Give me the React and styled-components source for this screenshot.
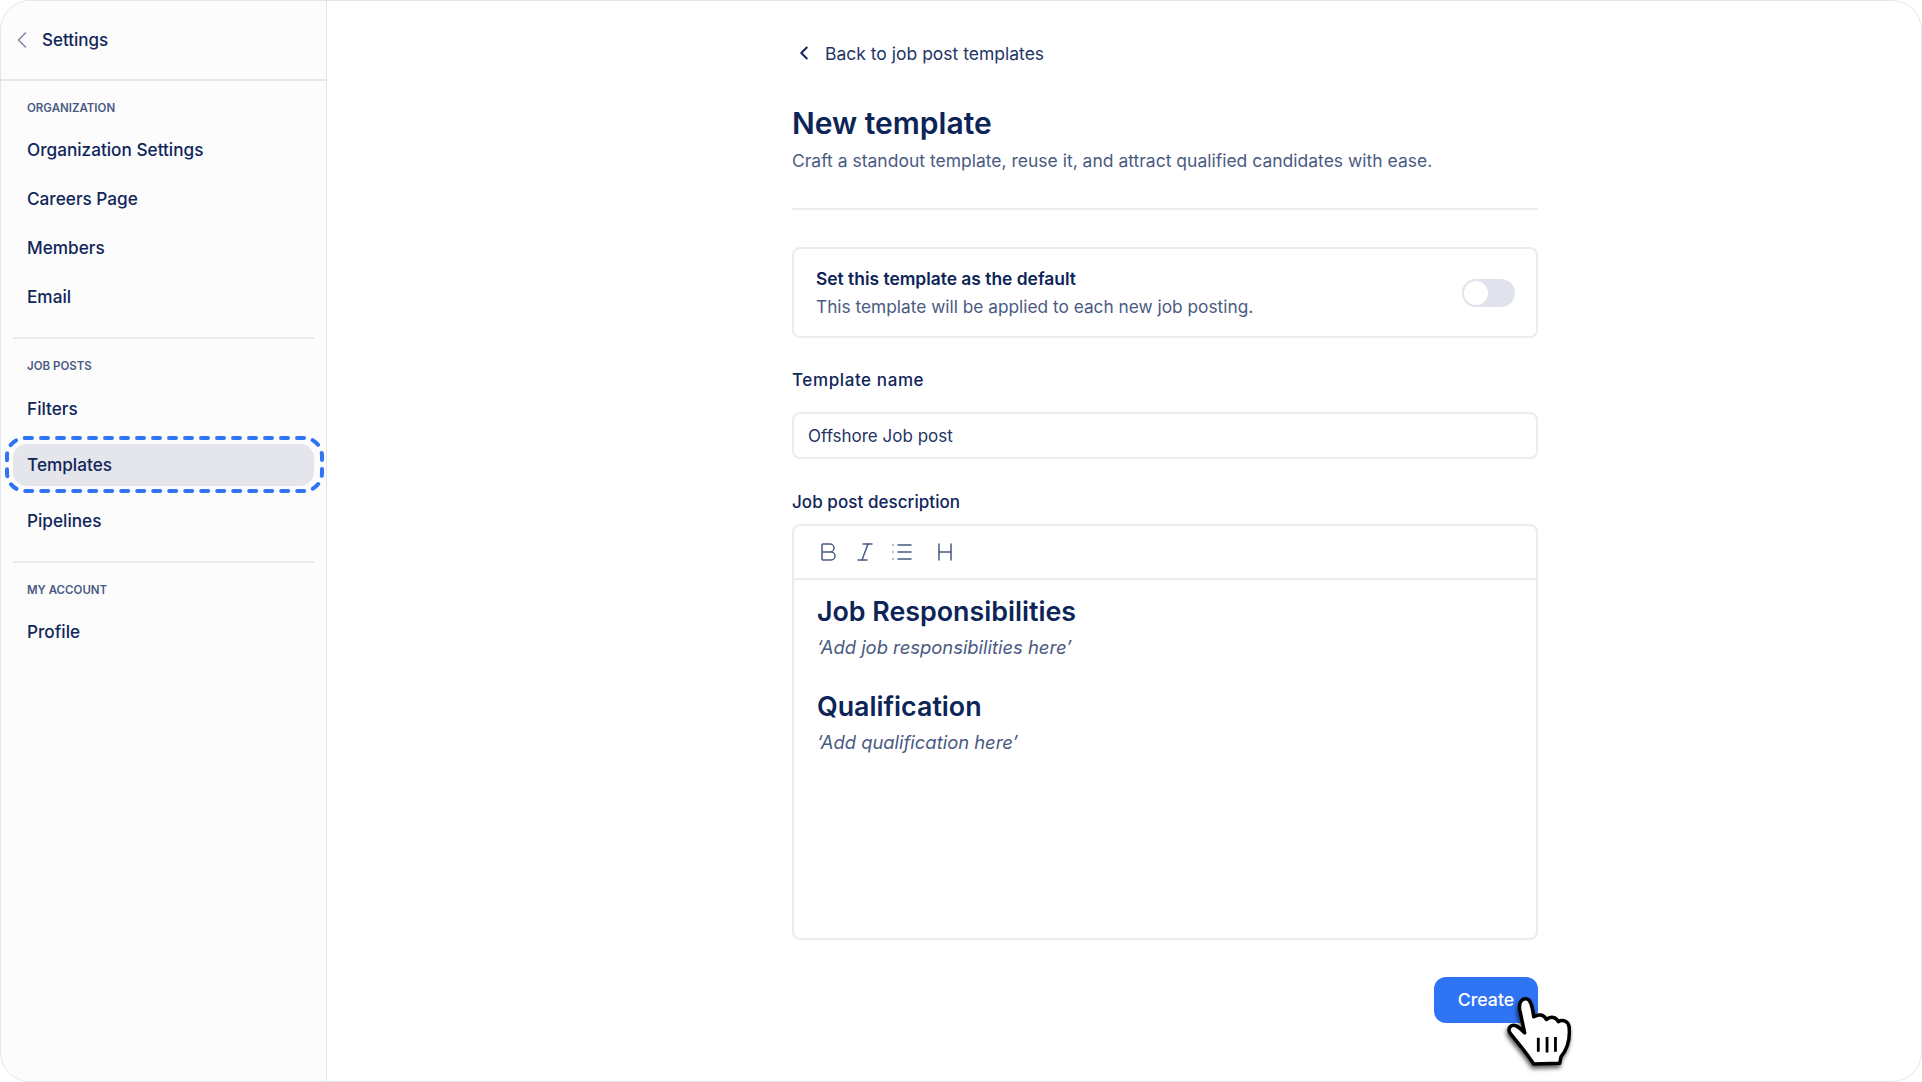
import styled, { createGlobalStyle } from "styled-components";
import { ChevronLeft, Bold, Italic, List, Heading } from "lucide-react";

const GlobalStyle = createGlobalStyle`
  html, body {
    margin: 0;
    padding: 0;
    background: #ffffff;
  }
  * {
    box-sizing: border-box;
  }
`;

const navGroups = [
  { title: "ORGANIZATION", items: ["Organization Settings", "Careers Page", "Members", "Email"] },
  { title: "JOB POSTS", items: ["Filters", "Templates", "Pipelines"], active: "Templates" },
  { title: "MY ACCOUNT", items: ["Profile"] },
];

const App = () => {
  return (
    <>
      <GlobalStyle />
      <Frame>
        <Sidebar>
          <SidebarHeader>
            <ChevronLeft size={28} strokeWidth={1.3} color="#7d88a6" />
            <span>Settings</span>
          </SidebarHeader>
          {navGroups.map((group) => (
            <NavGroup key={group.title} $tight={!!group.active}>
              <GroupTitle $tight={!!group.active}>{group.title}</GroupTitle>
              {group.items.map((item) =>
                item === group.active ? (
                  <ActiveItem key={item}>
                    {item}
                    <DashedRing width="319" height="57" viewBox="0 0 319 57">
                      <rect x="2" y="2" width="315" height="53" rx="18" fill="none" stroke="#2f74f5" strokeWidth="4" strokeLinecap="round" strokeDasharray="7 9" />
                    </DashedRing>
                  </ActiveItem>
                ) : (
                  <NavItem key={item} $tight={!!group.active}>{item}</NavItem>
                )
              )}
            </NavGroup>
          ))}
        </Sidebar>
        <Main>
          <Column>
            <BackLink>
              <ChevronLeft size={22} strokeWidth={2.2} color="#10265a" />
              <span>Back to job post templates</span>
            </BackLink>
            <Title>New template</Title>
            <Subtitle>Craft a standout template, reuse it, and attract qualified candidates with ease.</Subtitle>
            <Divider />
            <DefaultCard>
              <div>
                <CardTitle>Set this template as the default</CardTitle>
                <CardText>This template will be applied to each new job posting.</CardText>
              </div>
              <Toggle />
            </DefaultCard>
            <FieldLabel $top={30} $bottom={20} $spacing={0.6}>Template name</FieldLabel>
            <Input>Offshore Job post</Input>
            <FieldLabel $top={31} $bottom={10} $spacing={0.06}>Job post description</FieldLabel>
            <Editor>
              <Toolbar>
                <ToolIcon $w={37}><Bold size={24} strokeWidth={1.5} /></ToolIcon>
                <ToolIcon $w={37}><Italic size={24} strokeWidth={1.5} /></ToolIcon>
                <ToolIcon $w={37}><List size={24} strokeWidth={1.5} /></ToolIcon>
                <ToolIcon $w={49}><Heading size={24} strokeWidth={1.5} /></ToolIcon>
              </Toolbar>
              <EditorBody>
                <EditorHeading>Job Responsibilities</EditorHeading>
                <EditorHint>‘Add job responsibilities here’</EditorHint>
                <EditorHeading $top={24}>Qualification</EditorHeading>
                <EditorHint>‘Add qualification here’</EditorHint>
              </EditorBody>
            </Editor>
            <Actions>
              <CreateButton>
                Create
                <HandCursor viewBox="255 105 200 220" width="70" height="77">
                  <path
                    d="M300 150 C296 128 308 116 320 119 C332 122 336 140 340 170 C352 162 368 162 376 178 C388 168 404 170 410 184 C424 176 440 184 441 200 C444 230 436 262 418 284 L414 303 L340 305 L328 288 C310 262 290 240 272 216 C264 202 276 190 290 196 C298 200 306 208 314 216 Z"
                    fill="#ffffff"
                    stroke="#000000"
                    strokeWidth="10"
                    strokeLinejoin="round"
                  />
                  <path d="M353 230 V270 M378 228 V272 M402 228 V270" stroke="#000000" strokeWidth="8" fill="none" />
                </HandCursor>
              </CreateButton>
            </Actions>
          </Column>
        </Main>
      </Frame>
    </>
  );
};

const Frame = styled.div`
  display: flex;
  width: 1922px;
  height: 1082px;
  overflow: hidden;
  background: #ffffff;
  border: 1px solid #e3e5ee;
  border-radius: 30px;
  font-family: Inter, "Liberation Sans", sans-serif;
  color: #10265a;
`;

const Sidebar = styled.aside`
  flex: 0 0 326px;
  background: #fcfcfd;
  border-right: 1px solid #e3e5ee;
`;

const SidebarHeader = styled.div`
  display: flex;
  align-items: center;
  gap: 6px;
  height: 80px;
  padding: 0 0 0 7px;
  border-bottom: 2px solid #e6e8ee;
  font-size: 17px;
  font-weight: 500;
`;

const NavGroup = styled.div`
  margin: 0 12px;
  padding: 16px 0 ${(p) => (p.$tight ? "12px" : "15px")};
  border-bottom: 2px solid #e8eaef;

  &:last-child {
    border-bottom: 0;
  }
`;

const GroupTitle = styled.div`
  height: 24px;
  margin-bottom: ${(p) => (p.$tight ? "2px" : "5px")};
  padding-left: 14px;
  line-height: 22px;
  font-size: 11.5px;
  font-weight: 600;
  color: #4a5a82;
`;

const NavItem = styled.div`
  display: flex;
  align-items: center;
  height: ${(p) => (p.$tight ? "56px" : "49px")};
  padding: 0 0 2px 14px;
  font-size: 17.2px;
  font-weight: 500;
`;

const ActiveItem = styled.div`
  position: relative;
  display: flex;
  align-items: center;
  height: 42px;
  margin: 7px 0;
  padding: 0 0 2px 14px;
  border-radius: 14px;
  background: #e5e6eb;
  font-size: 17.2px;
  font-weight: 500;
`;

const DashedRing = styled.svg`
  position: absolute;
  left: -8px;
  top: -8px;
`;

const Main = styled.main`
  flex: 1;
  padding: 40px 0 0 465px;
`;

const Column = styled.div`
  width: 746px;
`;

const BackLink = styled.div`
  display: flex;
  align-items: center;
  gap: 10px;
  height: 24px;
  padding-left: 1px;
  font-size: 17.5px;
  color: #1f3566;
`;

const Title = styled.h1`
  margin: 40px 0 8px;
  line-height: 36px;
  font-size: 30px;
  font-weight: 600;
  color: #0d2458;
`;

const Subtitle = styled.p`
  margin: 0 0 35px;
  line-height: 24px;
  font-size: 17.5px;
  color: #4a5a82;
`;

const Divider = styled.div`
  height: 2px;
  background: #eaecf1;
`;

const DefaultCard = styled.div`
  display: flex;
  align-items: center;
  justify-content: space-between;
  height: 91px;
  margin-top: 37px;
  padding: 0 21px 0 22px;
  border: 2px solid #eaecf1;
  border-radius: 8px;
`;

const CardTitle = styled.div`
  margin-top: 2px;
  line-height: 26px;
  font-size: 17.4px;
  font-weight: 600;
  color: #0d2458;
`;

const CardText = styled.div`
  margin-top: 1px;
  line-height: 28px;
  font-size: 17.3px;
  color: #4a5a82;
`;

const Toggle = styled.div`
  position: relative;
  width: 53px;
  height: 28px;
  border-radius: 14px;
  background: #e0e3eb;

  &::after {
    content: "";
    position: absolute;
    left: 2px;
    top: 2px;
    width: 24px;
    height: 24px;
    border-radius: 50%;
    background: #ffffff;
  }
`;

const FieldLabel = styled.div`
  margin: ${(p) => p.$top}px 0 ${(p) => p.$bottom}px;
  line-height: 24px;
  font-size: 17px;
  font-weight: 500;
  letter-spacing: ${(p) => p.$spacing}px;
`;

const Input = styled.div`
  display: flex;
  align-items: center;
  height: 47px;
  padding-left: 14px;
  border: 2px solid #eaecf1;
  border-radius: 8px;
  font-size: 17px;
  color: #1f3566;
`;

const Editor = styled.div`
  height: 416px;
  border: 2px solid #eaecf1;
  border-radius: 8px;
`;

const Toolbar = styled.div`
  display: flex;
  align-items: center;
  height: 54px;
  padding: 0 0 1px 15px;
  border-bottom: 2px solid #eaecf1;
`;

const ToolIcon = styled.div`
  display: flex;
  justify-content: center;
  width: ${(p) => p.$w}px;
  color: #4a5a82;
`;

const EditorBody = styled.div`
  padding: 13px 0 0 23px;
`;

const EditorHeading = styled.h2`
  margin: ${(p) => p.$top || 0}px 0 2px;
  line-height: 36px;
  font-size: 26.8px;
  font-weight: 600;
  color: #0d2458;
`;

const EditorHint = styled.p`
  margin: 0 0 3px;
  line-height: 33px;
  font-size: 18.4px;
  font-style: italic;
  color: #4a5a82;
`;

const Actions = styled.div`
  display: flex;
  justify-content: flex-end;
  margin-top: 37px;
`;

const CreateButton = styled.div`
  position: relative;
  display: flex;
  align-items: center;
  justify-content: center;
  width: 104px;
  height: 46px;
  padding-bottom: 2px;
  border-radius: 12px;
  background: #2f74f5;
  color: #ffffff;
  font-size: 17.7px;
  font-weight: 500;
`;

const HandCursor = styled.svg`
  position: absolute;
  left: 70px;
  top: 17px;
  overflow: visible;
  filter: drop-shadow(-1px 3px 2px rgba(0, 0, 0, 0.65));
`;

export default App;
